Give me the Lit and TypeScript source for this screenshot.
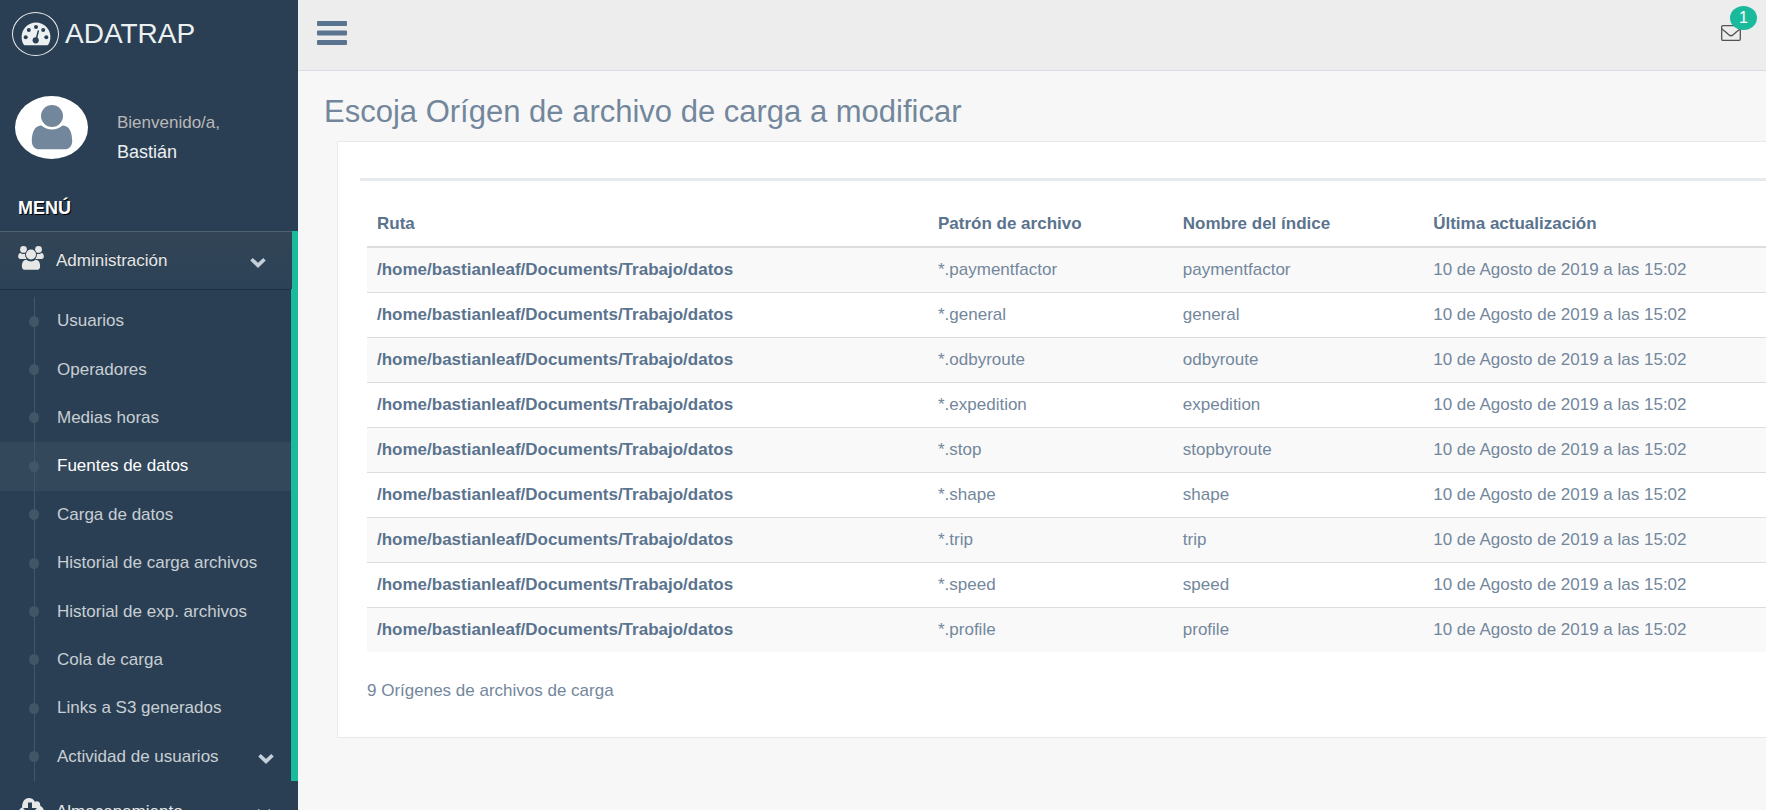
import { LitElement, html, css, svg } from "lit";
import { customElement, state } from "lit/decorators.js";
import { classMap } from "lit/directives/class-map.js";

const ROUTE = "/home/bastianleaf/Documents/Trabajo/datos";
const UPDATED = "10 de Agosto de 2019 a las 15:02";

const SOURCES = [
  { pattern: "*.paymentfactor", index: "paymentfactor" },
  { pattern: "*.general", index: "general" },
  { pattern: "*.odbyroute", index: "odbyroute" },
  { pattern: "*.expedition", index: "expedition" },
  { pattern: "*.stop", index: "stopbyroute" },
  { pattern: "*.shape", index: "shape" },
  { pattern: "*.trip", index: "trip" },
  { pattern: "*.speed", index: "speed" },
  { pattern: "*.profile", index: "profile" },
];

const SUBMENU = [
  { label: "Usuarios" },
  { label: "Operadores" },
  { label: "Medias horas" },
  { label: "Fuentes de datos", current: true },
  { label: "Carga de datos" },
  { label: "Historial de carga archivos" },
  { label: "Historial de exp. archivos" },
  { label: "Cola de carga" },
  { label: "Links a S3 generados" },
  { label: "Actividad de usuarios", expandable: true },
];

const chevron = html`<svg class="chevron" width="16" height="11" viewBox="0 0 16 11" aria-hidden="true">
  <path d="M1.5 2.2 8 8.4 14.5 2.2" fill="none" stroke="currentColor" stroke-width="3.6"/>
</svg>`;

const gauge = html`<svg width="30" height="24" viewBox="0 0 30 24" aria-hidden="true">
  <path fill="currentColor" d="M15 .5C7 .5.6 7 .6 15c0 2.700.7 5.300 2 7.500.3.500.8.800 1.300.800h22.200c.5 0 1-.3 1.300-.8 1.300-2.200 2-4.800 2-7.500C29.400 7 23 .5 15 .5z"/>
  ${[[4.7, 15.2], [7.8, 8], [15, 4.9], [22.2, 8], [25.3, 15.2]].map(
    ([x, y]) => svg`<circle cx=${x} cy=${y} r="2" fill="#2a3f54"/>`
  )}
  <path d="M17.300 9 15 18.300" stroke="#2a3f54" stroke-width="1.500" stroke-linecap="round"/>
  <circle cx="14.700" cy="18.300" r="3.100" fill="#2a3f54"/>
</svg>`;

const group = html`<svg width="26" height="24" viewBox="0 0 26 24" fill="currentColor" aria-hidden="true">
  <circle cx="5.500" cy="3.400" r="3.400"/><circle cx="20.500" cy="3.400" r="3.400"/>
  <path d="M2.600 6.900c.9.800 1.900 1.200 2.900 1.200.8 0 1.300-.2 1.900-.4-.3 2 .2 3.700 1.300 5.200H2.500C1 12.900.2 12.200.2 10.800.2 8.900.700 6.900 2.600 6.900z"/>
  <path d="M23.400 6.900c-.9.800-1.900 1.200-2.900 1.200-.8 0-1.300-.2-1.900-.4.300 2-.2 3.700-1.300 5.200h6.200c1.500 0 2.300-.7 2.300-2.100 0-1.900-.5-3.900-2.400-3.900z"/>
  <circle cx="13" cy="8.500" r="5.700" fill="#304457"/>
  <circle cx="13" cy="8.500" r="5"/>
  <path d="M8.600 13.800c1.200 1.100 2.700 1.600 4.400 1.600s3.200-.5 4.400-1.600c3.600 0 4.700 3.200 4.700 6.600 0 2.100-1.400 3.400-3.400 3.400H7.300c-2 0-3.400-1.300-3.400-3.400 0-3.400 1.100-6.600 4.700-6.600z"/>
</svg>`;

const cloud = html`<svg width="26" height="24" viewBox="0 0 26 24" aria-hidden="true">
  <path fill="currentColor" d="M6.500 22C3 22 .5 19.500.5 16c0-2.600 1.400-4.600 3.600-5.500C3.800 5.500 6.500 1 10.800 1c3 0 5 1.500 6.100 3.700 3-1.600 5.900.7 5.200 4 2.400.9 3.900 3.200 3.900 6 0 3.500-2.600 7.300-6 7.300z"/>
  <path fill="#2a3f54" d="M10 5.500h4V11h5l-7 7-7-7h5z"/>
</svg>`;

@customElement("app-root")
class AppRoot extends LitElement {
  @state() private open = true;

  static styles = css`
    :host {
      display: flex;
      height: 100vh;
      overflow: hidden;
      background: #f7f7f7;
      color: #73879c;
      font: 17px/24px "Liberation Sans", Arial, sans-serif;
    }
    * { box-sizing: border-box; }
    a { color: inherit; text-decoration: none; }
    button { border: 0; padding: 0; background: none; color: inherit; font: inherit; cursor: pointer; }
    ul { list-style: none; margin: 0; padding: 0; }
    svg { display: block; flex: none; }

    .sidebar {
      flex: none;
      width: 298px;
      overflow: hidden;
      background: #2a3f54;
      color: #e7e7e7;
    }
    .brand {
      display: flex;
      align-items: center;
      gap: 6px;
      height: 68px;
      padding-left: 12px;
      color: #ecf0f1;
      font-size: 28px;
      line-height: 36px;
    }
    .brand-mark {
      display: grid;
      place-items: center;
      width: 47px;
      height: 44px;
      border: 1px solid #eaeaea;
      border-radius: 50%;
    }
    .profile { display: flex; gap: 29px; padding: 28px 0 0 15px; height: 124px; }
    .avatar {
      display: grid;
      justify-content: center;
      padding-top: 8px;
      width: 73px;
      height: 63px;
      border-radius: 50%;
      background: #fff;
      color: #73879c;
    }
    .welcome { padding-top: 15px; line-height: 24px; color: #bab8b8; }
    .welcome p { margin: 0; }
    .name { padding-top: 5px; color: #ecf0f1; font-size: 18px; }
    .section {
      margin: 0;
      padding: 4px 18px 11px;
      color: #fff;
      font-size: 18px;
      line-height: 24px;
      text-shadow: 1px 1px #000;
    }
    .group + .group { margin-top: 1px; }
    .group-head {
      display: flex;
      align-items: center;
      width: 100%;
      height: 58px;
      padding: 2px 26px 0 18px;
      text-align: left;
    }
    .group-head svg:first-child { margin: -6px 12px 0 0; }
    .group-head .chevron { margin: 2px 0 0 auto; color: #c4cfda; }
    .active .group-head {
      border-right: 6px solid #1abb9c;
      background: linear-gradient(#334556, #2c4257);
      box-shadow: rgba(0, 0, 0, 0.25) 0 1px 0, inset rgba(255, 255, 255, 0.16) 0 1px 0;
      text-shadow: rgba(0, 0, 0, 0.25) 0 -1px 0;
    }
    .submenu {
      position: relative;
      display: grid;
      grid-auto-rows: 1fr;
      height: 492px;
      padding-top: 8px;
      border-right: 7px solid #1abb9c;
      color: rgba(255, 255, 255, 0.75);
    }
    .submenu::before {
      content: "";
      position: absolute;
      top: 8px;
      bottom: 0;
      left: 34px;
      width: 1px;
      background: #425668;
    }
    .submenu a {
      display: flex;
      align-items: center;
      height: 100%;
      padding: 0 17px 0 29px;
    }
    .submenu a::before {
      content: "";
      position: relative;
      width: 10px;
      height: 11px;
      margin-right: 18px;
      border-radius: 50%;
      background: #425668;
    }
    .submenu .current { background: rgba(255, 255, 255, 0.05); color: #fff; }
    .submenu .chevron { margin: 4px 0 0 auto; color: #c4cfda; }

    .main { flex: 1; min-width: 0; }
    .topbar {
      display: flex;
      justify-content: space-between;
      height: 71px;
      padding: 0 8px 0 19px;
      background: #ededed;
      border-bottom: 1px solid #d9dee4;
      color: #5a738e;
    }
    .toggle { align-self: flex-start; padding-top: 21px; }
    .mail { position: relative; padding: 25px 17px 0 0; height: 70px; color: #515356; }
    .badge {
      position: absolute;
      top: 6px;
      right: 1px;
      width: 27px;
      height: 24px;
      border-radius: 50%;
      background: #1abb9c;
      color: #fff;
      font-size: 16px;
      text-align: center;
    }
    .title {
      margin: 0;
      padding: 22px 26px 11px;
      font-size: 31px;
      line-height: 37px;
      font-weight: 400;
    }
    .panel {
      margin-left: 39px;
      padding: 36px 0 34px 22px;
      border: 1px solid #e6e9ed;
      border-right: 0;
      background: #fff;
    }
    .rule { height: 3px; margin: 0; border: 0; background: #e6e9ed; }
    .content { padding: 20px 0 0 7px; }
    table { width: 100%; border-collapse: separate; border-spacing: 0; table-layout: fixed; }
    th, td { height: 45px; padding: 10px; text-align: left; border-top: 1px solid #ddd; }
    thead th { height: 47px; border-top: 0; border-bottom: 2px solid #ddd; color: #5a738e; }
    tbody tr:first-child td { height: 44px; border-top: 0; }
    tbody tr:nth-child(odd) { background: #f9f9f9; }
    .route { width: 40.1%; }
    .pattern { width: 17.5%; }
    .index { width: 17.9%; }
    .link { color: #5a738e; font-weight: 700; }
    .count { margin: 0; padding: 27px 0 0; }
  `;

  render() {
    return html`
      <nav class="sidebar">
        <a class="brand" href="#"><span class="brand-mark">${gauge}</span>ADATRAP</a>
        <div class="profile">
          <div class="avatar">
            <svg width="42" height="46" viewBox="0 0 42 46" fill="currentColor" aria-hidden="true">
              <circle cx="21" cy="12" r="11"/>
              <path d="M10.500 21.500c3 2.600 6.600 4 10.500 4s7.500-1.400 10.500-4c7.500-.3 9.700 8.500 9.700 15.500 0 5-3 8.300-7.400 8.300H8.200C3.800 45.300.800 42 .800 37c0-7 2.200-15.800 9.700-15.500z"/>
            </svg>
          </div>
          <div class="welcome"><p>Bienvenido/a,</p><p class="name">Bastián</p></div>
        </div>
        <h3 class="section">MENÚ</h3>
        <div class="group active">
          <button class="group-head" aria-expanded=${this.open} @click=${() => (this.open = !this.open)}>
            ${group}<span>Administración</span>${chevron}
          </button>
          ${this.open
            ? html`<ul class="submenu">
                ${SUBMENU.map(
                  (item) => html`<li>
                    <a href="#" class=${classMap({ current: !!item.current })}>${item.label}${item.expandable ? chevron : ""}</a>
                  </li>`
                )}
              </ul>`
            : ""}
        </div>
        <div class="group">
          <button class="group-head">${cloud}<span>Almacenamiento</span>${chevron}</button>
        </div>
      </nav>
      <main class="main">
        <header class="topbar">
          <button class="toggle" aria-label="Menú">
            <svg width="30" height="24" viewBox="0 0 30 24" fill="currentColor" aria-hidden="true">
              <rect width="30" height="5" rx="1"/><rect y="9.500" width="30" height="5" rx="1"/><rect y="19" width="30" height="5" rx="1"/>
            </svg>
          </button>
          <a class="mail" href="#" aria-label="Mensajes">
            <svg width="20" height="16" viewBox="0 0 20 16" fill="none" stroke="currentColor" stroke-width="1.300" aria-hidden="true">
              <rect x=".7" y=".7" width="18.600" height="14.600" rx="1.200"/>
              <path d="M.8 4c3 2.200 5.200 4 7 5.700 1.500 1.400 2.900 1.400 4.400 0C14 8 16.200 6.200 19.200 4"/>
            </svg>
            <span class="badge">1</span>
          </a>
        </header>
        <h1 class="title">Escoja Orígen de archivo de carga a modificar</h1>
        <section class="panel">
          <hr class="rule" />
          <div class="content">
            <table>
              <thead>
                <tr>
                  <th class="route">Ruta</th>
                  <th class="pattern">Patrón de archivo</th>
                  <th class="index">Nombre del índice</th>
                  <th>Última actualización</th>
                </tr>
              </thead>
              <tbody>
                ${SOURCES.map(
                  (s) => html`<tr>
                    <td><a class="link" href="#">${ROUTE}</a></td>
                    <td>${s.pattern}</td>
                    <td>${s.index}</td>
                    <td>${UPDATED}</td>
                  </tr>`
                )}
              </tbody>
            </table>
            <p class="count">9 Orígenes de archivos de carga</p>
          </div>
        </section>
      </main>
    `;
  }
}
